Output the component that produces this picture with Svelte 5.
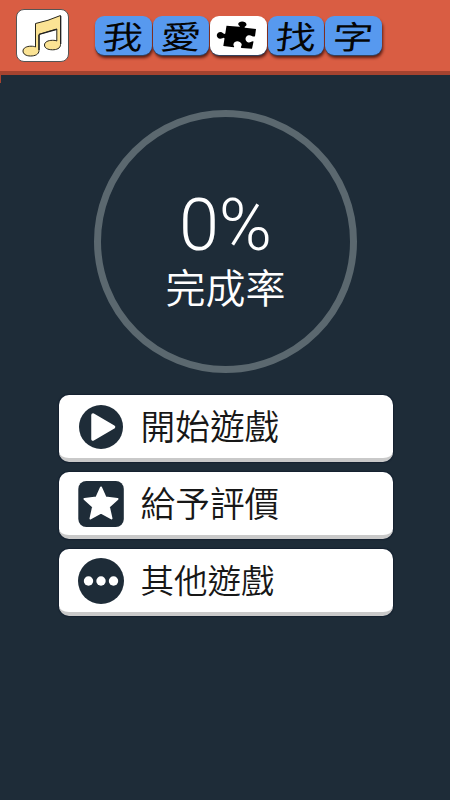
<script>
	let progress = 0;
	let soundOn = true;

	const titleTiles = ['我', '愛', null, '找', '字'];

	const menu = [
		{ id: 'play', label: '開始遊戲' },
		{ id: 'rate', label: '給予評價' },
		{ id: 'more', label: '其他遊戲' }
	];

	function toggleSound() {
		soundOn = !soundOn;
	}
</script>

<div class="game">
	<header class="top-bar">
		<!-- Sound toggle -->
		<button class="sound" class:muted={!soundOn} on:click={toggleSound} aria-label="音樂">
			<svg viewBox="0 0 52 52" width="52" height="52">
				<path
					d="M18.500 13.500 Q31 11 43.500 5.500 V34.500 C43.500 38.500 39.500 39.800 35.500 39.800 C30.500 39.800 27.500 38 27.500 35 C27.500 32 31 30.300 35.500 30.300 C37.500 30.300 39 30.500 39.800 31 V19 Q31 21.500 22 24.300 V40.500 C22 44.500 18 46 13.500 46 C9 46 6 44 6 41 C6 38 9.500 36.200 14 36.200 C16 36.200 17.500 36.500 18.500 37 Z"
					fill="#fbe394"
					stroke="#27251c"
					stroke-width="1"
					stroke-linejoin="round"
				/>
				<path d="M43.700 6 V34 M22 25 V40 M39.800 19.300 L22 24.500" fill="none" stroke="#222" stroke-width="1.300" />
			</svg>
		</button>

		<!-- Title tiles -->
		<div class="title">
			{#each titleTiles as tile}
				{#if tile}
					<div class="tile"><span>{tile}</span></div>
				{:else}
					<div class="tile puzzle">
						<svg viewBox="0 0 56 39" width="56" height="39">
							<path
								d="M16.500 9.800 L29.500 10.800 C31 10.500 28.200 9.500 28.200 8 C28.200 4.500 36.500 4.500 36.500 8.500 C36.500 10.500 33.500 10.500 35 11.800 L46 13 L45 20.200 C43 21.500 41.500 18.700 38.500 19.300 C34.500 20.500 34.500 25.500 38.500 26.500 C41 26.800 42.500 24.500 43.500 25.700 L42 32.700 L31.500 32 C29.800 31 32.500 29.800 31.500 27.800 C30 24.500 24.500 24.300 23.500 28 C23 30 25 30.500 23.800 31.300 L13.300 30 L14.500 22.500 C13.800 20.500 12.500 23 9.800 22.700 C5.500 22 6 16 10.500 16 C13 16 13.500 19 15.300 17.500 Z"
								fill="#000"
							/>
						</svg>
					</div>
				{/if}
			{/each}
		</div>
	</header>

	<main>
		<!-- Completion ring -->
		<div class="ring">
			<div class="percent">{progress}%</div>
			<div class="caption">完成率</div>
		</div>

		<!-- Menu buttons -->
		<nav class="menu">
			{#each menu as item}
				<button class="menu-button {item.id}">
					<svg class="icon" viewBox="0 0 46 46" width="46" height="46">
						{#if item.id === 'play'}
							<circle cx="23" cy="23" r="22" fill="#1e2c38" />
							<path
								d="M15 11 L35.500 23 L15 35 Z"
								fill="#fff"
								stroke="#fff"
								stroke-width="3.500"
								stroke-linejoin="round"
							/>
						{:else if item.id === 'rate'}
							<rect x="0.300" y="0" width="45.500" height="46" rx="8" fill="#1e2c38" />
							<path
								d="M23 6.500 L27.600 16.600 L39.500 18 L30.900 25.800 L33.500 37.500 L23 31.600 L12.500 37.500 L15.100 25.800 L6.500 18 L18.400 16.600 Z"
								fill="#fff"
								stroke="#fff"
								stroke-width="2"
								stroke-linejoin="round"
							/>
						{:else}
							<circle cx="23" cy="23" r="23" fill="#1e2c38" />
							<circle cx="10.500" cy="23" r="4.700" fill="#fff" />
							<circle cx="23" cy="23" r="4.700" fill="#fff" />
							<circle cx="35.500" cy="23" r="4.700" fill="#fff" />
						{/if}
					</svg>
					<span class="label">{item.label}</span>
				</button>
			{/each}
		</nav>
	</main>
</div>

<style>
	:global(body) {
		background: #1e2c38;
	}

	.game {
		width: 450px;
		height: 800px;
		overflow: hidden;
		background: #1e2c38;
		font-family: Roboto, 'Noto Sans CJK TC', sans-serif;
	}

	button {
		border: none;
		padding: 0;
		cursor: pointer;
		font-family: inherit;
	}

	.top-bar {
		position: relative;
		box-sizing: border-box;
		height: 75px;
		padding: 9px 0 0 16px;
		display: flex;
		align-items: flex-start;
		background: #d95d43;
		border-bottom: 4px solid #a5432f;
	}

	/* Small tail of the bar on the left edge */
	.top-bar::after {
		content: '';
		position: absolute;
		left: 0;
		top: 71px;
		width: 1px;
		height: 12px;
		background: #a5432f;
	}

	.sound {
		box-sizing: border-box;
		width: 53px;
		height: 53px;
		background: #fff;
		border: 1px solid #555;
		border-radius: 8px;
		overflow: hidden;
	}

	.sound svg {
		display: block;
	}

	.muted svg {
		opacity: 0.3;
	}

	.title {
		display: flex;
		gap: 1px;
		margin: 7px 0 0 26px;
	}

	.tile {
		width: 56.500px;
		height: 39px;
		display: flex;
		align-items: center;
		justify-content: center;
		background: #5799ef;
		border-radius: 9px;
		box-shadow:
			0 1px 0 #34425e,
			1px 3px 3px rgba(50, 10, 5, 0.75);
	}

	.tile span {
		font-family: 'Noto Sans CJK TC', sans-serif;
		font-size: 38px;
		font-weight: 400;
		line-height: 38px;
		color: #050505;
		transform: translateY(-1px) scale(1.06, 0.85) skewX(-5deg);
	}

	.puzzle {
		background: #fff;
	}

	main {
		display: flex;
		flex-direction: column;
		align-items: center;
		padding-top: 35px;
	}

	.ring {
		box-sizing: border-box;
		width: 263px;
		height: 263px;
		padding-top: 74px;
		margin-left: 1px;
		border: 7px solid #5b686f;
		border-radius: 50%;
		color: #fff;
		text-align: center;
	}

	.percent {
		font-size: 72px;
		font-weight: 300;
		line-height: 70px;
	}

	.caption {
		font-family: 'Noto Sans CJK TC', sans-serif;
		font-size: 40px;
		font-weight: 350;
		line-height: 50px;
	}

	.menu {
		display: flex;
		flex-direction: column;
		gap: 10px;
		margin: 22px 0 0 1px;
	}

	.menu-button {
		box-sizing: border-box;
		width: 334px;
		height: 67px;
		padding-left: 19px;
		display: flex;
		align-items: center;
		background: #fff;
		border-bottom: 4px solid #c9c9c9;
		border-radius: 10px;
		box-shadow: 0 0 1px 1px #142130;
	}

	.icon {
		flex: none;
	}

	.label {
		margin: 0 0 3px 17px;
		font-family: 'Noto Sans CJK TC', sans-serif;
		font-size: 34.700px;
		font-weight: 350;
		line-height: 50px;
		color: #171717;
		white-space: nowrap;
	}

	.more .label {
		font-size: 33.500px;
	}
</style>
